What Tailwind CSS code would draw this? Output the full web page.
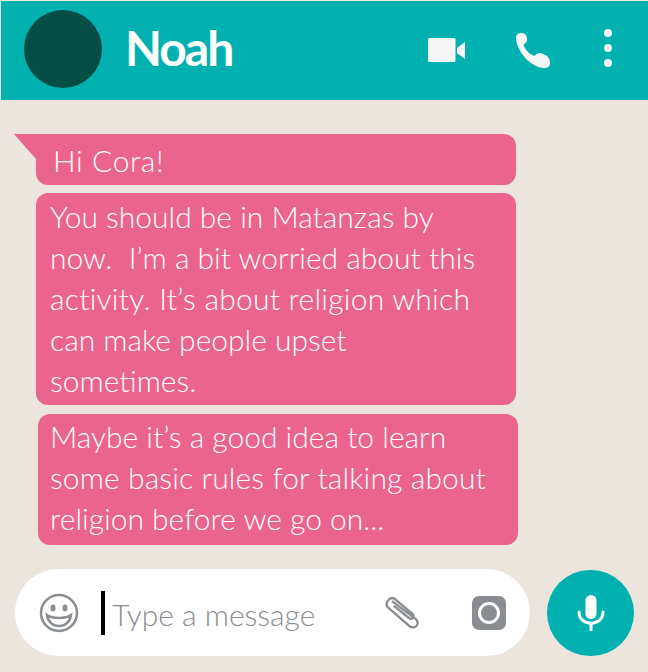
<!DOCTYPE html>
<html lang="en">
<head>
  <meta charset="UTF-8" />
  <title>Noah</title>
  <script src="https://cdn.jsdelivr.net/npm/@tailwindcss/browser@4"></script>
</head>
<body class="bg-[#ebe5de] font-['Lato','Liberation_Sans',sans-serif]">
<div class="w-[648px] h-[672px] flex flex-col overflow-hidden">

  <!-- header -->
  <div class="h-[99px] mt-px ml-px bg-[#00b1af] shrink-0 flex items-center pl-[23px]">
    <div class="w-[78px] h-[78px] rounded-full bg-[#054e45] -mt-[4px]"></div>
    <div class="ml-[23px] w-[303px] text-white text-[48px] tracking-[-2px] leading-none font-bold -mt-[6px]">Noah</div>
    <svg class="w-[38px] h-[24px] -mt-[1px]" viewBox="0 0 38 24" fill="#f6f6f6">
      <rect x="0" y="0" width="27.5" height="24" rx="1.5" />
      <path d="M29 10 L37 4 V21 L29 15 Z" />
    </svg>
    <svg class="w-[36px] h-[36px] ml-[49px]" viewBox="0 0 36 36" fill="#f6f6f6">
      <path d="M1 5 C1 1 4 0 6.5 0 C10 0 12.5 3 12 7 C11.8 9.5 9.5 10.5 8.5 12 C10 16.5 14.5 21.5 19.5 23 C21.5 20.5 24 19.5 27 20.5 C32 22 35 25 35 30 C35 34 32 35.5 28 35 C14 33 2 18 1 5 Z" />
    </svg>
    <div class="ml-[53px] -mt-[5px] flex flex-col gap-[7px]">
      <div class="w-[8px] h-[8px] rounded-full bg-[#f6f6f6]"></div>
      <div class="w-[8px] h-[8px] rounded-full bg-[#f6f6f6]"></div>
      <div class="w-[8px] h-[8px] rounded-full bg-[#f6f6f6]"></div>
    </div>
  </div>

  <!-- messages -->
  <div class="flex-1 pt-[34px] pl-[36px] text-white text-[30px] font-light leading-[41px]">
    <div class="relative w-[480px] h-[51px] bg-[#eb648d] rounded-b-[12px] rounded-tr-[12px] pl-[17px] pt-[6px] tracking-[0.6px]">
      <svg class="absolute left-[-22px] top-0 w-[23px] h-[25px]" viewBox="0 0 23 25" fill="#eb648d"><path d="M0 0 H23 V25 H22 Z" /></svg>
      Hi Cora!
    </div>
    <div class="w-[480px] h-[212px] mt-[8px] bg-[#eb648d] rounded-[12px] pl-[14px] pt-[3px]">
      You should be in Matanzas by<br />now.&nbsp; I’m a bit worried about this<br /><span class="tracking-[0.24px]">activity. It’s about religion which</span><br />can make people upset<br />sometimes.
    </div>
    <div class="w-[480px] h-[131px] mt-[9px] ml-[2px] bg-[#eb648d] rounded-[12px] pl-[12px] pt-[2px]">
      Maybe it’s a good idea to learn<br /><span class="tracking-[0.12px]">some basic rules for talking about</span><br />religion before we go on...
    </div>
  </div>

  <!-- input row -->
  <div class="h-[87px] mb-[16px] pl-[15px] flex items-center shrink-0">
    <div class="w-[515px] h-[87px] bg-white rounded-full flex items-center pl-[24px]">
      <svg class="w-[40px] h-[40px] shrink-0" viewBox="0 0 40 40" fill="none" stroke="#8a8d92" stroke-width="2.5">
        <circle cx="20" cy="20" r="18" />
        <ellipse cx="14" cy="15" rx="2.5" ry="3.5" fill="#8a8d92" stroke="none" />
        <ellipse cx="26" cy="15" rx="2.5" ry="3.5" fill="#8a8d92" stroke="none" />
        <path d="M8 22 C14 26 26 26 32 22 C31 29 26 33 20 33 C14 33 9 29 8 22 Z" />
      </svg>
      <div class="w-[4px] h-[44px] bg-black ml-[22px] shrink-0"></div>
      <div class="ml-[7px] w-[272px] text-[#8a8d92] text-[30px] font-light leading-none mt-[3px]">Type a message</div>
      <svg class="w-[38px] h-[34px] shrink-0" viewBox="0 0 40 36" fill="none" stroke="#8a8d92" stroke-width="2.5" stroke-linecap="round">
        <path d="M9 6 L33 24 C39 29 33 36 27 32 L4 12 C0 8 6 0 11 3 L30 19 C33 22 29 26 26 23 L11 11" />
      </svg>
      <div class="w-[34px] h-[34px] ml-[50px] rounded-[7px] bg-[#8a8d92] flex items-center justify-center shrink-0">
        <div class="w-[22px] h-[22px] rounded-full border-[3px] border-white"></div>
      </div>
    </div>
    <div class="w-[87px] h-[86px] mt-px ml-[17px] rounded-full bg-[#00b1af] flex items-center justify-center shrink-0">
      <svg class="w-[28px] h-[36px]" viewBox="0 0 28 36" fill="none" stroke="#fff" stroke-width="3">
        <rect x="8.5" y="0" width="11" height="24" rx="5.5" fill="#fff" stroke="none" />
        <path d="M2 17 C2 32 26 32 26 17" stroke-linecap="round" />
        <path d="M14 27 V36" />
      </svg>
    </div>
  </div>
</div>
</body>
</html>
